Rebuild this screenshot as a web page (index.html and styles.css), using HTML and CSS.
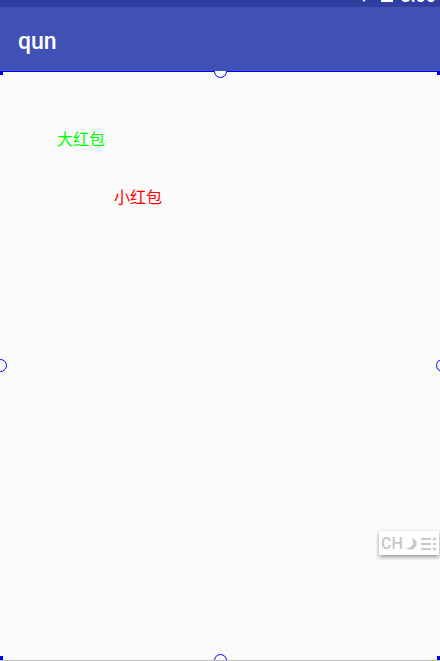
FILE: index.html
```html
<!DOCTYPE html>
<html lang="zh">
<head>
<meta charset="utf-8">
<meta name="viewport" content="width=device-width, initial-scale=1">
<title>qun</title>
<link rel="stylesheet" href="styles.css">
</head>
<body>
<div class="status-bar">
  <svg class="wifi" width="18" height="16" viewBox="0 0 18 16" aria-hidden="true"><path d="M9 16 1 5Q9-2 17 5Z" fill="#fff"/></svg>
  <svg class="signal" width="12" height="16" viewBox="0 0 12 16" aria-hidden="true"><path d="M0 2h12v14H0z" fill="#fff"/></svg>
  <time class="clock">8:00</time>
</div>
<header class="app-bar"><h1 class="title">qun</h1></header>
<main class="canvas">
  <p class="label label-big">大红包</p>
  <p class="label label-small">小红包</p>
  <div class="ime">
    <span class="ime-lang">CH</span>
    <svg width="12" height="12" viewBox="0 0 12 12" aria-hidden="true"><path d="M6 0C10 1 12 5 10 8 8 12 3 13 0 10 5 11 9 6 6 0Z" fill="#c8c8c8"/></svg>
    <svg class="ime-menu" width="16" height="12" viewBox="0 0 16 12" aria-hidden="true"><path d="M0 0h10v2H0zM12 0h3v2h-3zM0 5h10v2H0zM12 5h3v2h-3zM0 10h10v2H0zM12 10h3v2h-3z" fill="#c8c8c8"/></svg>
  </div>
  <i class="corner top left"></i>
  <i class="corner top right"></i>
  <i class="corner bottom left"></i>
  <i class="corner bottom right"></i>
  <span class="clip clip-top"><i class="knob"></i></span>
  <span class="clip clip-bottom"><i class="knob"></i></span>
  <span class="clip clip-left"><i class="knob"></i></span>
  <span class="clip clip-right"><i class="knob"></i></span>
</main>
</body>
</html>
```
FILE: styles.css
```css
* {
  box-sizing: border-box;
}

body {
  display: flex;
  flex-direction: column;
  min-height: 100vh;
  margin: 0;
  background: #fafafa;
  font-family: Roboto, "Noto Sans CJK SC", sans-serif;
}

.status-bar {
  display: flex;
  justify-content: flex-end;
  align-items: flex-end;
  height: 7px;
  padding: 0 4px 5px 0;
  overflow: hidden;
  background: #303f9f;
  color: #fff;
}

.wifi {
  margin-right: 8px;
}

.signal {
  margin-right: 8px;
}

.clock {
  font-size: 18px;
  font-weight: 500;
  line-height: 12px;
}

.app-bar {
  display: flex;
  align-items: center;
  height: 64px;
  padding: 6px 18px 0;
  background: #3f51b5;
  color: #fff;
}

.title {
  margin: 0;
  font-size: 23px;
  font-weight: 500;
  line-height: 28px;
}

.canvas {
  position: relative;
  display: flex;
  flex: 1;
  flex-direction: column;
  border-top: 1px solid #00f;
  border-bottom: 1px solid #bebebe;
}

.label {
  margin: 0;
  font-family: "Noto Sans CJK SC", sans-serif;
  font-size: 16px;
  line-height: 24px;
}

.label-big {
  margin: 54px 0 0 57px;
  color: #0f0;
}

.label-small {
  margin: 34px 0 0 114px;
  color: #f00;
}

.ime {
  display: flex;
  align-items: center;
  align-self: flex-end;
  gap: 3px;
  height: 24px;
  min-width: 60px;
  margin: auto 1px 105px 0;
  padding: 2px 2px 0;
  background: #fff;
  box-shadow: 0 2px 4px rgba(0, 0, 0, 0.4);
  color: #c8c8c8;
}

.ime-lang {
  font-family: Roboto, sans-serif;
  font-size: 16px;
  font-weight: 500;
  line-height: 20px;
}

.ime-menu {
  margin-left: auto;
}

.corner {
  position: absolute;
  width: 3px;
  height: 3px;
  background: #00f;
}

.top {
  top: 0;
}

.bottom {
  bottom: 0;
  height: 4px;
}

.left {
  left: 0;
}

.right {
  right: 0;
}

.clip {
  position: absolute;
  display: flex;
  overflow: hidden;
}

.knob {
  flex: none;
  width: 13px;
  height: 13px;
  border: 1px solid #00f;
  border-radius: 50%;
  background: #fafafa;
}

.clip-top,
.clip-bottom {
  left: calc(50% - 6px);
  width: 13px;
}

.clip-top {
  top: -1px;
  align-items: flex-end;
  height: 7px;
}

.clip-bottom {
  bottom: 0;
  height: 6px;
}

.clip-left,
.clip-right {
  top: calc(50% - 7px);
  height: 13px;
}

.clip-left {
  left: 0;
  justify-content: flex-end;
  width: 7px;
}

.clip-right {
  right: 0;
  width: 4px;
}
```
